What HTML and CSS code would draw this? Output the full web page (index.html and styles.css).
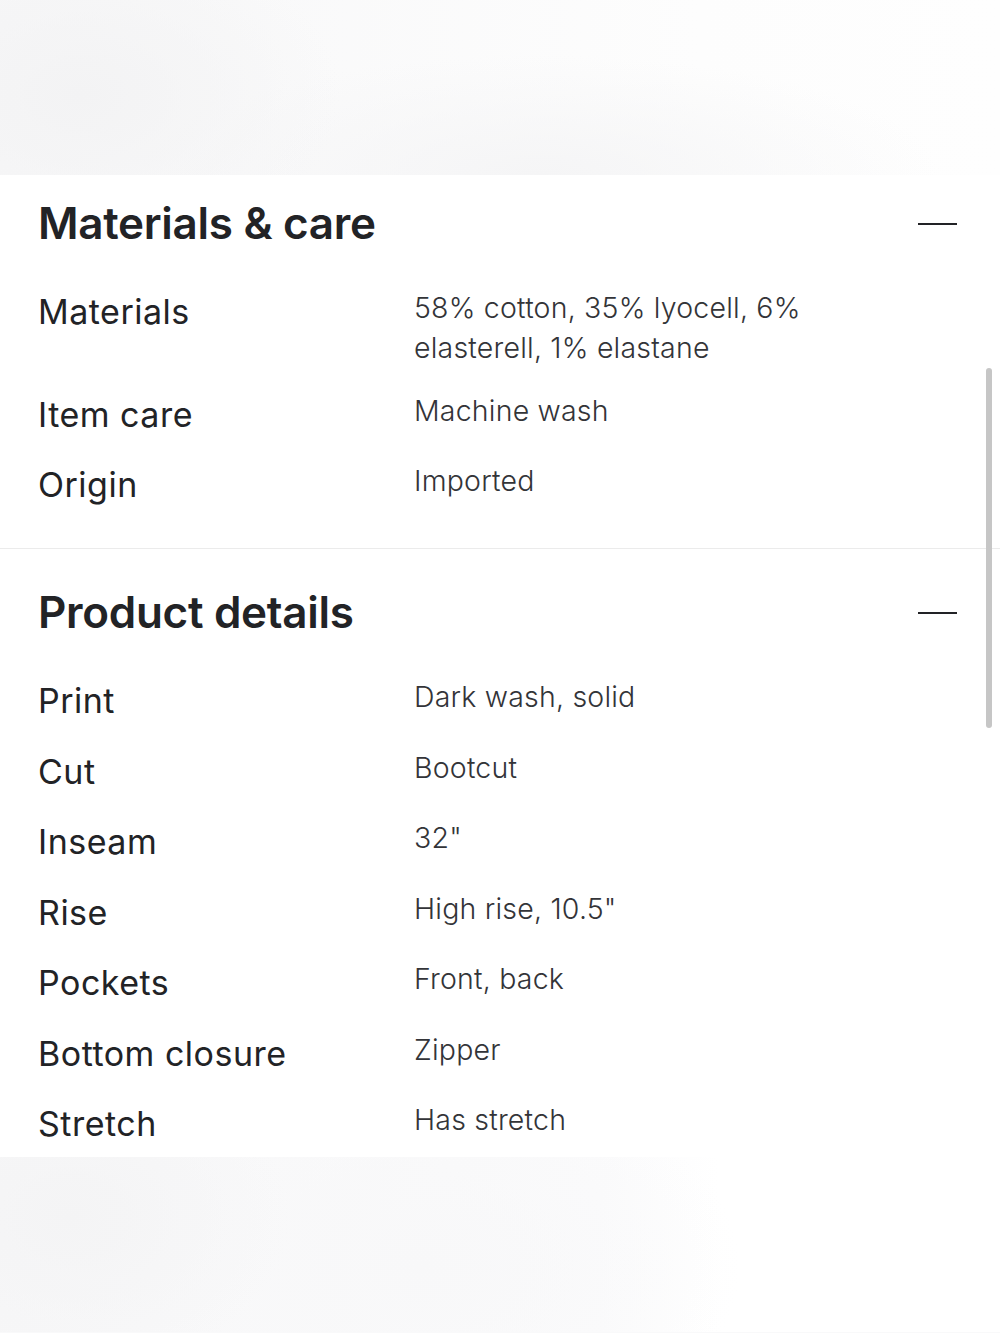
FILE: index.html
```html
<!DOCTYPE html>
<html lang="en">
<head>
  <meta charset="UTF-8" />
  <title>Product info</title>
  <link rel="stylesheet" href="styles.css">
</head>
<body>

  <div class="backdrop backdrop-top"></div>

  <div class="panel">
    <div class="scrollbar"></div>

    <section class="info-section first">
      <div class="section-head">
        <h2>Materials &amp; care</h2>
        <span class="collapse"></span>
      </div>
      <div class="info-rows">
        <div class="label">Materials</div>
        <div class="value">58% cotton, 35% lyocell, 6%<br>elasterell, 1% elastane</div>
        <div class="label">Item care</div>
        <div class="value">Machine wash</div>
        <div class="label">Origin</div>
        <div class="value">Imported</div>
      </div>
    </section>

    <section class="info-section">
      <div class="section-head">
        <h2>Product details</h2>
        <span class="collapse"></span>
      </div>
      <div class="info-rows">
        <div class="label">Print</div>
        <div class="value">Dark wash, solid</div>
        <div class="label">Cut</div>
        <div class="value">Bootcut</div>
        <div class="label">Inseam</div>
        <div class="value">32"</div>
        <div class="label">Rise</div>
        <div class="value">High rise, 10.5"</div>
        <div class="label">Pockets</div>
        <div class="value">Front, back</div>
        <div class="label">Bottom closure</div>
        <div class="value">Zipper</div>
        <div class="label">Stretch</div>
        <div class="value">Has stretch</div>
      </div>
    </section>
  </div>

  <div class="backdrop backdrop-bottom"></div>

</body>
</html>
```

FILE: styles.css
```css
body {
  margin: 0;
  padding: 0;
  font-family: 'Inter', 'Liberation Sans', sans-serif;
  background: #f9f9fa;
  color: #222326;
}

.backdrop {
  height: 175px;
}

.backdrop-top {
  background:
    radial-gradient(ellipse 260px 170px at 80px 95px, #f3f3f4, rgba(243, 243, 244, 0)),
    radial-gradient(ellipse 400px 120px at 540px 175px, #f5f5f6, rgba(245, 245, 246, 0)),
    linear-gradient(to right, #f7f7f8, #fdfdfd 70%, #fefefe);
}

.backdrop-bottom {
  background:
    radial-gradient(ellipse 220px 160px at 70px 60px, #f4f4f5, rgba(244, 244, 245, 0)),
    radial-gradient(ellipse 320px 200px at 420px 110px, #f8f8f9, rgba(248, 248, 249, 0)),
    linear-gradient(to right, #f7f7f8, #fbfbfc 60%, #ffffff 72%);
}

.panel {
  position: relative;
  background: #fff;
  padding-bottom: 9px;
}

.scrollbar {
  position: absolute;
  top: 193px;
  right: 8px;
  width: 6px;
  height: 360px;
  border-radius: 3px;
  background: #c6c6c6;
  z-index: 2;
}

.info-section {
  padding: 35px 43px 39px 38px;
}

.info-section.first {
  padding-top: 20px;
  border-bottom: 1px solid #ebebeb;
}

.info-section:last-child {
  padding-bottom: 0;
}

.section-head {
  display: flex;
  justify-content: space-between;
  align-items: center;
  margin-bottom: 37px;
}

.section-head h2 {
  margin: 0;
  font-size: 44px;
  line-height: 56px;
  font-weight: 600;
  letter-spacing: -0.3px;
}

.collapse {
  display: block;
  width: 39px;
  height: 2.5px;
  background: #222326;
  margin-top: 2px;
}

.info-rows {
  display: grid;
  grid-template-columns: 376px 1fr;
  row-gap: 22.5px;
}

.label {
  font-size: 34px;
  line-height: 48px;
  font-weight: 400;
  letter-spacing: 0.5px;
  color: #222326;
}

.value {
  font-size: 28.5px;
  line-height: 40px;
  font-weight: 300;
  letter-spacing: 0.2px;
  color: #333438;
}
```
